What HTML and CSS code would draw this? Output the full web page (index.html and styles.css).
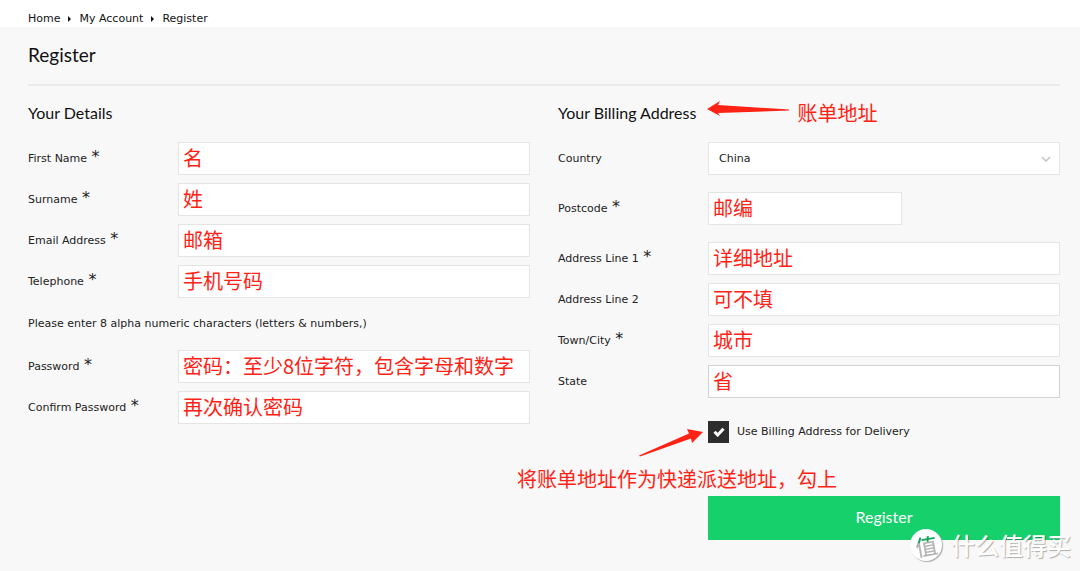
FILE: index.html
```html
<!DOCTYPE html>
<html lang="en">
<head>
<meta charset="utf-8">
<meta name="viewport" content="width=device-width, initial-scale=1">
<title>Register</title>
<link rel="stylesheet" href="styles.css">
</head>
<body>
<nav class="crumbs" aria-label="Breadcrumb">
  <a href="#">Home</a>
  <svg class="crumb-sep" viewBox="0 0 3 6" aria-hidden="true"><path d="M0 0 3 3 0 6Z"/></svg>
  <a href="#">My Account</a>
  <svg class="crumb-sep" viewBox="0 0 3 6" aria-hidden="true"><path d="M0 0 3 3 0 6Z"/></svg>
  <a href="#">Register</a>
</nav>
<main class="page">
  <h1 class="title">Register</h1>
  <form class="columns">
    <section class="col">
      <h2 class="subtitle">Your Details</h2>
      <div class="row"><label class="label" for="first">First Name <span class="req">*</span></label><input class="field" id="first" type="text" value="名"></div>
      <div class="row"><label class="label" for="last">Surname <span class="req">*</span></label><input class="field" id="last" type="text" value="姓"></div>
      <div class="row"><label class="label" for="email">Email Address <span class="req">*</span></label><input class="field" id="email" type="text" value="邮箱"></div>
      <div class="row"><label class="label" for="tel">Telephone <span class="req">*</span></label><input class="field" id="tel" type="tel" value="手机号码"></div>
      <p class="hint">Please enter 8 alpha numeric characters (letters &amp; numbers,)</p>
      <div class="row"><label class="label" for="pass">Password <span class="req">*</span></label><input class="field" id="pass" type="text" value="密码：至少8位字符，包含字母和数字"></div>
      <div class="row"><label class="label" for="confirm">Confirm Password <span class="req">*</span></label><input class="field" id="confirm" type="text" value="再次确认密码"></div>
    </section>
    <section class="col">
      <div class="heading-line">
        <h2 class="subtitle">Your Billing Address</h2>
        <svg class="arrow-left" viewBox="0 0 82 15" aria-hidden="true"><path d="M0 8 13 0 11 4 82 8.500V9.500L11 12 13 15Z"/></svg>
        <span class="note">账单地址</span>
      </div>
      <div class="row"><label class="label" for="country">Country</label>
        <div class="select-box">
          <select class="field select" id="country"><option>China</option></select>
          <svg class="chevron" viewBox="0 0 10 6" aria-hidden="true"><path d="M1 1 5 5 9 1"/></svg>
        </div>
      </div>
      <div class="row row-spaced"><label class="label" for="postcode">Postcode <span class="req">*</span></label><input class="field field-short" id="postcode" type="text" value="邮编"></div>
      <div class="row"><label class="label" for="line1">Address Line 1 <span class="req">*</span></label><input class="field" id="line1" type="text" value="详细地址"></div>
      <div class="row"><label class="label" for="line2">Address Line 2</label><input class="field" id="line2" type="text" value="可不填"></div>
      <div class="row"><label class="label" for="town">Town/City <span class="req">*</span></label><input class="field" id="town" type="text" value="城市"></div>
      <div class="row"><label class="label" for="state">State</label><input class="field field-active" id="state" type="text" value="省"></div>
      <div class="actions">
        <div class="check-line">
          <span class="check-box">
            <input class="check" id="same" type="checkbox" checked>
            <svg class="tick" viewBox="0 0 12 10" aria-hidden="true"><path d="M1.500 4.800 4.700 8 10.500 1.800"/></svg>
          </span>
          <label for="same">Use Billing Address for Delivery</label>
        </div>
        <svg class="arrow-up" viewBox="0 0 64 28" aria-hidden="true"><path d="M0 26.500 50 4.500 48 0 64 3 53 14 52 9.500 1 27.500Z"/></svg>
        <span class="note note-delivery">将账单地址作为快递派送地址，勾上</span>
        <button class="submit" type="submit">Register</button>
      </div>
    </section>
  </form>
  <div class="mark">
    <span class="mark-badge"><span class="mark-glyph">值</span></span>
    <span class="mark-text">什么值得买</span>
  </div>
</main>
</body>
</html>
```
FILE: styles.css
```css
* { box-sizing: border-box; }

body {
  margin: 0;
  min-height: 100vh;
  display: flex;
  flex-direction: column;
  background: #fff;
  color: #222;
  font: 11px/16px "DejaVu Sans", "Noto Sans CJK SC", sans-serif;
}

.crumbs {
  display: flex;
  align-items: center;
  gap: 8px;
  padding: 11px 28px 0;
}
.crumbs a { color: #111; text-decoration: none; }
.crumb-sep { width: 3px; height: 6px; fill: #111; }

.page {
  position: relative;
  flex: 1;
  padding: 16px 20px 31px 28px;
  background: #f8f8f8;
}

.title, .subtitle {
  margin: 0;
  color: #111;
  font-family: Lato, "Liberation Sans", sans-serif;
  font-weight: 400;
}
.title {
  padding-bottom: 17px;
  border-bottom: 2px solid #ebebeb;
  font-size: 19px;
  line-height: 24px;
}
.subtitle { font-size: 16px; line-height: 24px; }

.columns {
  display: grid;
  grid-template-columns: 1fr 1fr;
  gap: 28px;
  padding-top: 15px;
}
.col {
  display: flex;
  flex-direction: column;
  gap: 8px;
}
.col > .subtitle, .heading-line { margin-bottom: 9px; }

.heading-line { display: flex; align-items: center; height: 24px; }
.arrow-left {
  align-self: flex-start;
  width: 82px;
  height: 15px;
  margin: 0 8px 0 11px;
  fill: #ff2315;
}

.row {
  display: grid;
  grid-template-columns: 150px 1fr;
  align-items: center;
}
.row-spaced { margin: 9px 0; }
.label { white-space: nowrap; }
.req {
  margin-left: 1px;
  font-family: "DejaVu Sans", sans-serif;
  font-size: 16px;
  line-height: 0;
}

.field {
  width: 100%;
  height: 33px;
  padding: 0 4px 3px;
  border: 1px solid #e4e4e4;
  border-radius: 0;
  background: #fff;
  color: #ff2315;
  font: 20px/28px "Noto Sans CJK SC", sans-serif;
}
.field-short { width: 55%; }
.field-active { border-color: #d2d2d2; }

.select-box { display: grid; align-items: center; }
.select-box > * { grid-area: 1 / 1; }
.select {
  appearance: none;
  padding: 0 10px;
  color: #222;
  font: 11px/16px "DejaVu Sans", sans-serif;
}
.chevron {
  justify-self: end;
  width: 10px;
  height: 6px;
  margin-right: 9px;
  fill: none;
  stroke: #c4c4c4;
  stroke-width: 1.5;
  pointer-events: none;
}

.hint { margin: 10px 0; }

.note {
  color: #ff2315;
  font: 20px/28px "Noto Sans CJK SC", sans-serif;
  white-space: nowrap;
}

.actions {
  position: relative;
  padding: 15px 0 0 150px;
}
.check-line { display: flex; align-items: center; gap: 8px; }
.check-box { display: grid; place-items: center; }
.check-box > * { grid-area: 1 / 1; }
.check {
  appearance: none;
  width: 21px;
  height: 22px;
  margin: 0;
  background: #2d2d2d;
}
.tick {
  width: 12px;
  height: 10px;
  fill: none;
  stroke: #fff;
  stroke-width: 3;
  pointer-events: none;
}
.arrow-up {
  position: absolute;
  left: 81px;
  top: 23px;
  width: 64px;
  height: 28px;
  fill: #ff2315;
}
.note-delivery { position: absolute; left: -41px; top: 59px; }

.submit {
  display: block;
  width: 100%;
  height: 44px;
  margin-top: 53px;
  padding: 0 0 2px;
  border: 0;
  background: #16d06c;
  color: #fff;
  font: 16px/24px Lato, "Liberation Sans", sans-serif;
}

.mark {
  position: absolute;
  right: 9px;
  bottom: 8px;
  display: flex;
  align-items: center;
  gap: 9px;
  color: #fff;
  pointer-events: none;
}
.mark-badge {
  display: grid;
  place-items: center;
  width: 32px;
  height: 32px;
  border-radius: 50%;
  background: #fff;
  box-shadow: 1px 1px 1px #aaa;
}
.mark-glyph {
  background: linear-gradient(#16a35a 40%, #b5b5b5 40%);
  background-clip: text;
  color: transparent;
  font: 500 22px/28px "Noto Sans CJK SC", sans-serif;
  transform: rotate(-10deg);
}
.mark-text {
  font: 500 24px/36px "Noto Sans CJK SC", sans-serif;
  text-shadow: 1px 1px 1px rgba(0, 0, 0, 0.3);
}
```
